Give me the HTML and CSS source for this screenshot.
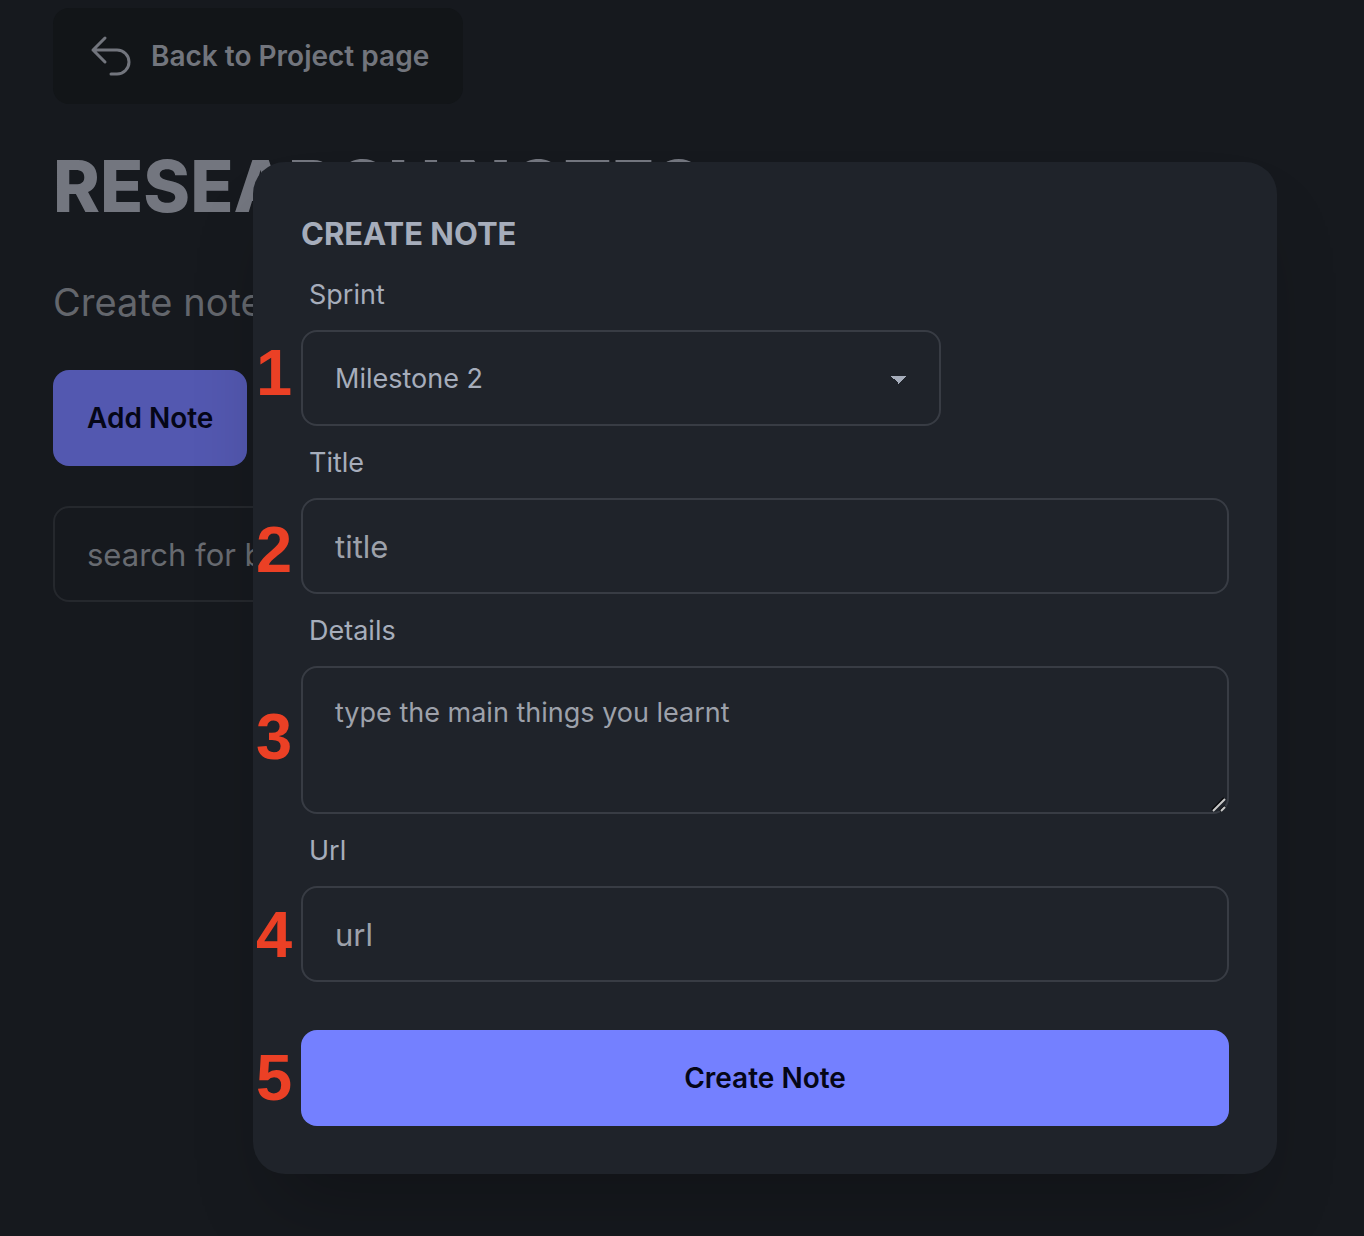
FILE: index.html
```html
<!DOCTYPE html>
<html lang="en">
<head>
<meta charset="utf-8">
<meta name="viewport" content="width=device-width, initial-scale=1">
<title>Research Notes</title>
<link rel="stylesheet" href="styles.css">
</head>
<body>
<main class="page">
  <a class="back" href="#">
    <svg class="back-icon" viewBox="0 0 24 24" aria-hidden="true"><path d="M9 15 3 9m0 0 6-6M3 9h12a6 6 0 0 1 0 12h-3"/></svg>
    Back to Project page
  </a>
  <h1 class="page-title">RESEARCH NOTES</h1>
  <p class="intro">Create note</p>
  <button class="btn btn-add" type="button">Add Note</button>
  <input class="field search" type="text" placeholder="search for b" aria-label="Search notes">
</main>
<div class="overlay">
  <form class="modal" role="dialog" aria-labelledby="modal-title">
    <h2 class="modal-title" id="modal-title">CREATE NOTE</h2>
    <label class="label" for="sprint">Sprint</label>
    <select class="field select" id="sprint"><option>Milestone 2</option></select>
    <label class="label" for="title">Title</label>
    <input class="field" id="title" type="text" placeholder="title">
    <label class="label" for="details">Details</label>
    <div class="textarea-wrap">
      <textarea class="field textarea" id="details" placeholder="type the main things you learnt"></textarea>
      <svg class="grip" viewBox="0 0 16 16" aria-hidden="true"><path class="grip-shade" d="M1 13 13 1M9 14 14 9"/><path d="M2 14 14 2M10 14 14 10"/></svg>
    </div>
    <label class="label" for="url">Url</label>
    <input class="field" id="url" type="text" placeholder="url">
    <button class="btn btn-create" type="button">Create Note</button>
    <span class="pin pin-sprint">1</span>
    <span class="pin pin-title">2</span>
    <span class="pin pin-details">3</span>
    <span class="pin pin-url">4</span>
    <span class="pin pin-create">5</span>
  </form>
</div>
</body>
</html>
```
FILE: styles.css
```css
* { box-sizing: border-box; }

body {
  margin: 0;
  min-height: 100vh;
  background: #16191e;
  color: #a6adbb;
  font-family: Inter, "Liberation Sans", sans-serif;
  font-size: 27px;
  line-height: 40px;
}

.page {
  display: flex;
  flex-direction: column;
  align-items: flex-start;
  padding: 8px 53px 0;
}

.back {
  display: flex;
  align-items: center;
  gap: 16px;
  height: 96px;
  padding: 0 34px;
  border-radius: 16px;
  background: #121518;
  color: #72757d;
  font-size: 28px;
  font-weight: 600;
  text-decoration: none;
}

.back-icon {
  width: 48px;
  height: 48px;
  fill: none;
  stroke: currentColor;
  stroke-width: 1.5;
  stroke-linecap: round;
  stroke-linejoin: round;
}

.page-title {
  margin: 46px 0 0;
  color: #73767f;
  font-size: 71px;
  line-height: 72px;
  font-weight: 800;
}

.intro {
  margin: 52px 0 0;
  color: #63666c;
  font-size: 38px;
  line-height: 56px;
}

.btn {
  height: 96px;
  border: 0;
  border-radius: 16px;
  padding: 0 34px;
  background: #7480ff;
  color: #050617;
  font-family: inherit;
  font-size: 28px;
  font-weight: 600;
}

.btn-add {
  margin-top: 40px;
  background: #5358b0;
}

.field {
  display: block;
  width: 100%;
  height: 96px;
  padding: 0 32px;
  border: 2px solid #383c44;
  border-radius: 16px;
  outline: 0;
  background: transparent;
  color: #a6adbb;
  font-family: inherit;
  font-size: 31px;
}

.field::placeholder {
  color: #9da1aa;
  opacity: 1;
}

.search {
  max-width: 640px;
  margin-top: 40px;
  border-color: #25282d;
}

.search::placeholder { color: #686b71; }

.overlay {
  position: absolute;
  inset: 0;
  display: flex;
  justify-content: center;
  align-items: flex-start;
  padding: 162px 0 60px 166px;
}

.modal {
  position: relative;
  width: 100%;
  max-width: 1024px;
  padding: 48px;
  border-radius: 32px;
  background: #1f232a;
  box-shadow: 0 48px 80px -24px rgba(0, 0, 0, 0.25);
}

.modal-title {
  margin: 0;
  font-size: 31px;
  line-height: 48px;
  font-weight: 700;
}

.label {
  display: block;
  padding: 17px 8px 15px;
}

.select {
  max-width: 640px;
  appearance: none;
  font-size: 27px;
  background-image:
    linear-gradient(45deg, transparent 50%, #a6adbb 50%),
    linear-gradient(135deg, #a6adbb 50%, transparent 50%);
  background-position: right 40px top 44px, right 32px top 44px;
  background-size: 8px 8px;
  background-repeat: no-repeat;
}

.textarea-wrap { position: relative; }

.textarea {
  height: 148px;
  padding: 25px 32px;
  font-size: 27px;
  line-height: 40px;
  resize: none;
}

.grip {
  position: absolute;
  right: 2px;
  bottom: 1px;
  width: 16px;
  height: 16px;
  fill: none;
  stroke: #c8c8c8;
  stroke-width: 2;
}

.grip-shade { stroke: #08090b; }

.btn-create {
  width: 100%;
  margin-top: 48px;
}

.pin {
  position: absolute;
  left: 3px;
  color: #eb4025;
  font-family: "Liberation Sans", Arial, sans-serif;
  font-size: 65px;
  line-height: 64px;
  font-weight: 700;
}

.pin-sprint { top: 179px; }
.pin-title { top: 356px; }
.pin-details { top: 543px; }
.pin-url { top: 741px; }
.pin-create { top: 884px; }
```
